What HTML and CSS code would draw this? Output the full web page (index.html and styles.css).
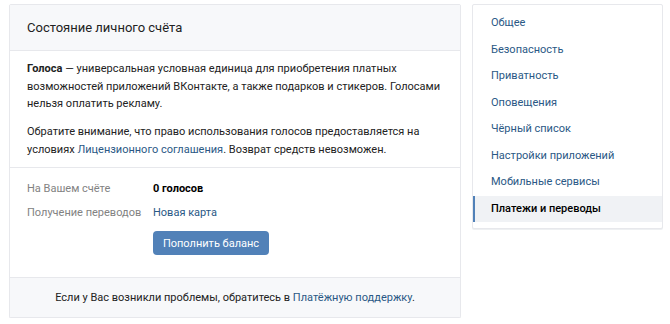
FILE: index.html
```html
<!DOCTYPE html>
<html lang="ru">
<head>
<meta charset="utf-8">
<link rel="stylesheet" href="styles.css">
</head>
<body>
<div class="page">
  <div class="card main">
    <div class="card-head">Состояние личного счёта</div>
    <div class="card-body">
      <p><b>Голоса</b> — универсальная условная единица для приобретения платных возможностей приложений ВКонтакте, а также подарков и стикеров. Голосами нельзя оплатить рекламу.</p>
      <p>Обратите внимание, что право использования голосов предоставляется на условиях <a href="#">Лицензионного соглашения</a>. Возврат средств невозможен.</p>
    </div>
    <div class="card-info">
      <div class="row"><span class="label">На Вашем счёте</span><span class="value"><b>0 голосов</b></span></div>
      <div class="row"><span class="label">Получение переводов</span><span class="value"><a href="#">Новая карта</a></span></div>
      <div class="row"><span class="label"></span><span class="value"><button class="btn">Пополнить баланс</button></span></div>
    </div>
    <div class="card-foot"><span>Если у Вас возникли проблемы, обратитесь в <a href="#">Платёжную поддержку</a>.</span></div>
  </div>
  <div class="card menu">
    <a class="item" href="#">Общее</a>
    <a class="item" href="#">Безопасность</a>
    <a class="item" href="#">Приватность</a>
    <a class="item" href="#">Оповещения</a>
    <a class="item" href="#">Чёрный список</a>
    <a class="item" href="#">Настройки приложений</a>
    <a class="item" href="#">Мобильные сервисы</a>
    <a class="item active" href="#">Платежи и переводы</a>
  </div>
</div>
</body>
</html>
```
FILE: styles.css
```css
* { box-sizing: border-box; }
html, body { margin: 0; background: #fff; }
body {
  font-family: Roboto, "Open Sans", "Liberation Sans", sans-serif;
  font-size: 11px;
  color: #000;
}
a { color: #2a5885; text-decoration: none; }
.page {
  display: flex;
  align-items: flex-start;
  gap: 11px;
  padding: 4px 0 0 9px;
}
.card {
  background: #fff;
  border: 1px solid #e7e8ec;
  border-radius: 2px;
  box-shadow: 0 1px 0 0 #eef0f2;
}
.main { width: 452px; }
.card-head {
  height: 46px;
  background: #f7f8fa;
  border-bottom: 1px solid #e7e8ec;
  padding: 0 17px;
  display: flex;
  align-items: center;
  font-size: 13px;
  color: #222;
}
.card-body {
  padding: 9px 17px 9px;
  border-bottom: 1px solid #e7e8ec;
  color: #222;
}
.card-body p { margin: 0; line-height: 17.5px; }
.card-body p + p { margin-top: 10.5px; }
.card-info {
  padding: 8px 17px 22px;
}
.row { display: flex; align-items: center; height: 24px; }
.row:last-child { height: 31px; align-items: flex-end; }
.label { width: 126px; color: #828282; }
.value { color: #000; }
.btn {
  display: block;
  background: #5181b8;
  color: #fff;
  border: 0;
  border-radius: 4px;
  height: 24px;
  width: 116px;
  padding: 0;
  font-family: inherit;
  font-size: 11px;
}
.card-foot {
  background: #f7f8fa;
  border-top: 1px solid #e7e8ec;
  height: 40px;
  display: flex;
  align-items: center;
  justify-content: center;
  color: #222;
}
.menu {
  width: 191px;
  padding: 5px 0 6px;
  display: flex;
  flex-direction: column;
}
.item {
  display: block;
  height: 26.5px;
  line-height: 26.5px;
  padding-left: 16px;
  color: #2a5885;
  border-left: 2px solid transparent;
}
.item.active {
  background: #f0f2f5;
  border-left-color: #5181b8;
  color: #000;
  font-weight: 500;
}
```
